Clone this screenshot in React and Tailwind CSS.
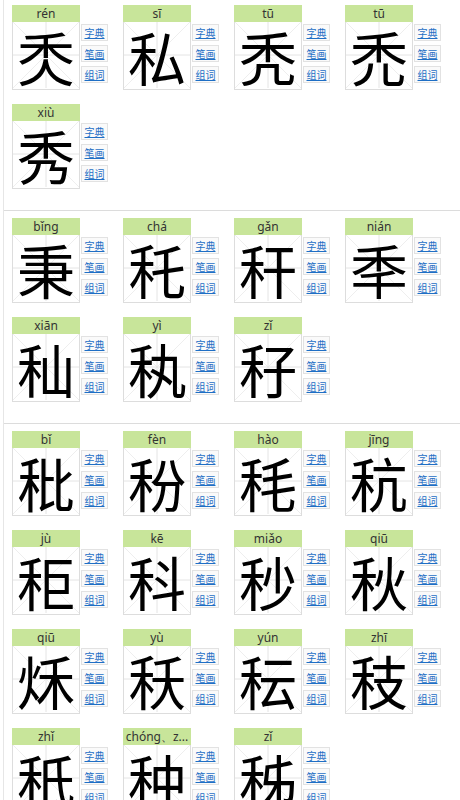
import React from "react";

const sections = [
  [
    ["秂", "rén"],
    ["私", "sī"],
    ["秃", "tū"],
    ["禿", "tū"],
    ["秀", "xiù"],
  ],
  [
    ["秉", "bǐng"],
    ["秅", "chá"],
    ["秆", "gǎn"],
    ["秊", "nián"],
    ["秈", "xiān"],
    ["秇", "yì"],
    ["秄", "zǐ"],
  ],
  [
    ["秕", "bǐ"],
    ["秎", "fèn"],
    ["秏", "hào"],
    ["秔", "jīng"],
    ["秬", "jù"],
    ["科", "kē"],
    ["秒", "miǎo"],
    ["秋", "qiū"],
    ["秌", "qiū"],
    ["秗", "yù"],
    ["秐", "yún"],
    ["秓", "zhī"],
    ["秖", "zhǐ"],
    ["种", "chóng、z..."],
    ["秭", "zǐ"],
  ],
];

function Grid() {
  return (
    <svg
      className="absolute inset-0"
      width="66"
      height="66"
      viewBox="0 0 66 66"
    >
      <line x1="0" y1="0" x2="66" y2="66" stroke="#eeeeee" strokeWidth="1" />
      <line x1="66" y1="0" x2="0" y2="66" stroke="#eeeeee" strokeWidth="1" />
      <line x1="33" y1="0" x2="33" y2="66" stroke="#e4e4e4" strokeWidth="1" />
      <line x1="0" y1="33" x2="66" y2="33" stroke="#e4e4e4" strokeWidth="1" />
    </svg>
  );
}

function Btn({ children }) {
  return (
    <div className="w-[27px] h-[17px] border border-[#e2e2e2] bg-[#fafafa] flex items-center justify-center">
      <span className="text-[10px] leading-none text-[#1f6fc5] underline font-['Noto_Sans_CJK_SC',sans-serif]">
        {children}
      </span>
    </div>
  );
}

function Card({ ch, py }) {
  return (
    <div className="flex w-[111px]">
      <div className="w-[68px] flex flex-col">
        <div className="h-[17px] bg-[#c8e59a] flex items-center justify-center text-[12px] leading-none text-[#333] font-['Noto_Sans','Liberation_Sans',sans-serif] whitespace-nowrap overflow-hidden">
          {py}
        </div>
        <div className="relative w-[68px] h-[68px] border border-[#dddddd] border-t-0">
          <Grid />
          <div className="absolute inset-0 flex items-center justify-center text-[58px] leading-none text-black font-['Noto_Sans_CJK_SC',sans-serif] font-normal">
            {ch}
          </div>
        </div>
      </div>
      <div className="flex flex-col gap-[4px] pt-[19px] ml-[1px]">
        <Btn>字典</Btn>
        <Btn>笔画</Btn>
        <Btn>组词</Btn>
      </div>
    </div>
  );
}

export default function App() {
  return (
    <div className="w-[460px] h-[800px] overflow-hidden bg-white">
      <div className="ml-[3px] border-l border-[#e6e6e6] min-h-[800px]">
        {sections.map((sec, i) => (
          <div
            key={i}
            className={
              "pl-[8px] pb-[21px] " +
              (i === 0 ? "pt-[5px] " : "pt-[7px] ") +
              (i < sections.length - 1 ? "border-b border-[#dcdcdc]" : "")
            }
          >
            <div className="grid grid-cols-[111px_111px_111px_111px] gap-y-[14px]">
              {sec.map(([ch, py], j) => (
                <Card key={j} ch={ch} py={py} />
              ))}
            </div>
          </div>
        ))}
      </div>
    </div>
  );
}
